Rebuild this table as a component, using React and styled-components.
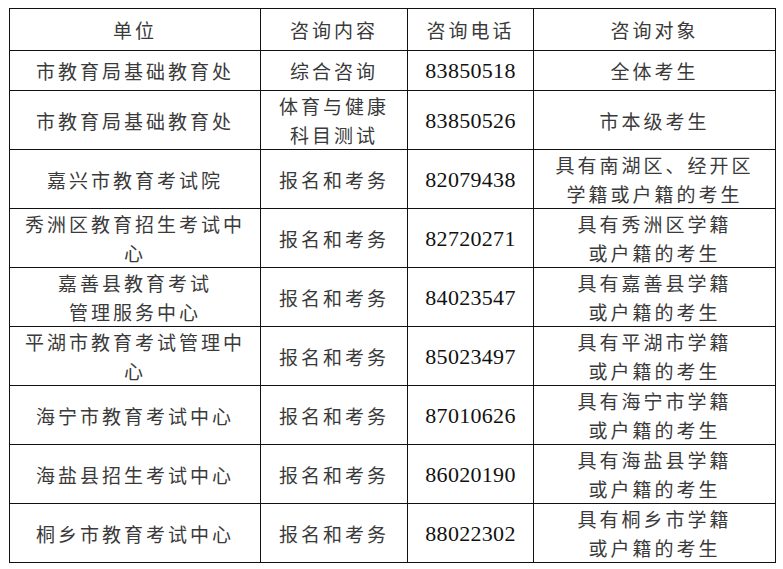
import styled, { createGlobalStyle } from 'styled-components';

const GlobalStyle = createGlobalStyle`
  html, body {
    margin: 0;
    padding: 0;
    background: #fff;
  }
`;

const ROWS = [
  { unit: ['市教育局基础教育处'], content: ['综合咨询'], phone: '83850518', target: ['全体考生'], h: 40.7 },
  { unit: ['市教育局基础教育处'], content: ['体育与健康', '科目测试'], phone: '83850526', target: ['市本级考生'], h: 58.7 },
  { unit: ['嘉兴市教育考试院'], content: ['报名和考务'], phone: '82079438', target: ['具有南湖区、经开区', '学籍或户籍的考生'], h: 58.7 },
  { unit: ['秀洲区教育招生考试中', '心'], content: ['报名和考务'], phone: '82720271', target: ['具有秀洲区学籍', '或户籍的考生'], h: 58.7 },
  { unit: ['嘉善县教育考试', '管理服务中心'], content: ['报名和考务'], phone: '84023547', target: ['具有嘉善县学籍', '或户籍的考生'], h: 58.7 },
  { unit: ['平湖市教育考试管理中', '心'], content: ['报名和考务'], phone: '85023497', target: ['具有平湖市学籍', '或户籍的考生'], h: 58.7 },
  { unit: ['海宁市教育考试中心'], content: ['报名和考务'], phone: '87010626', target: ['具有海宁市学籍', '或户籍的考生'], h: 58.7 },
  { unit: ['海盐县招生考试中心'], content: ['报名和考务'], phone: '86020190', target: ['具有海盐县学籍', '或户籍的考生'], h: 58.7 },
  { unit: ['桐乡市教育考试中心'], content: ['报名和考务'], phone: '88022302', target: ['具有桐乡市学籍', '或户籍的考生'], h: 57.7 },
];

const Page = styled.div`
  padding: 8px 0 0 9px;
`;

const Table = styled.table`
  border-collapse: collapse;
  table-layout: fixed;
  width: 766px;
`;

const Row = styled.tr`
  height: ${p => p.$h}px;
`;

const Cell = styled.td`
  border: 1px solid #111;
  padding: 0 2px;
  text-align: center;
  vertical-align: middle;
  color: #3a3a3a;
  font-family: "Noto Sans CJK SC", sans-serif;
  font-size: 19px;
  font-weight: 400;
  letter-spacing: 3px;
  line-height: 29px;
  white-space: nowrap;
`;

const HeadCell = styled.th`
  border: 1px solid #111;
  padding: 0 2px;
  text-align: center;
  vertical-align: middle;
  color: #3a3a3a;
  font-family: "Noto Sans CJK SC", sans-serif;
  font-size: 19px;
  font-weight: 400;
  letter-spacing: 3px;
  line-height: 29px;
`;

const PhoneCell = styled.td`
  border: 1px solid #111;
  padding: 0 2px;
  text-align: center;
  vertical-align: middle;
  color: #111;
  font-family: "Liberation Serif", "Times New Roman", serif;
  font-size: 22px;
  letter-spacing: 0.3px;
  line-height: 29px;
`;

const Line = styled.div``;

const Lines = ({ items }) => items.map((t, i) => <Line key={i}>{t}</Line>);

export default function App() {
  return (
    <Page>
      <GlobalStyle />
      <Table>
        <colgroup>
          <col style={{ width: 251 }} />
          <col style={{ width: 147 }} />
          <col style={{ width: 126 }} />
          <col style={{ width: 242 }} />
        </colgroup>
        <thead>
          <Row $h={41.7}>
            <HeadCell>单位</HeadCell>
            <HeadCell>咨询内容</HeadCell>
            <HeadCell>咨询电话</HeadCell>
            <HeadCell>咨询对象</HeadCell>
          </Row>
        </thead>
        <tbody>
          {ROWS.map((r, i) => (
            <Row key={i} $h={r.h}>
              <Cell><Lines items={r.unit} /></Cell>
              <Cell><Lines items={r.content} /></Cell>
              <PhoneCell>{r.phone}</PhoneCell>
              <Cell><Lines items={r.target} /></Cell>
            </Row>
          ))}
        </tbody>
      </Table>
    </Page>
  );
}
